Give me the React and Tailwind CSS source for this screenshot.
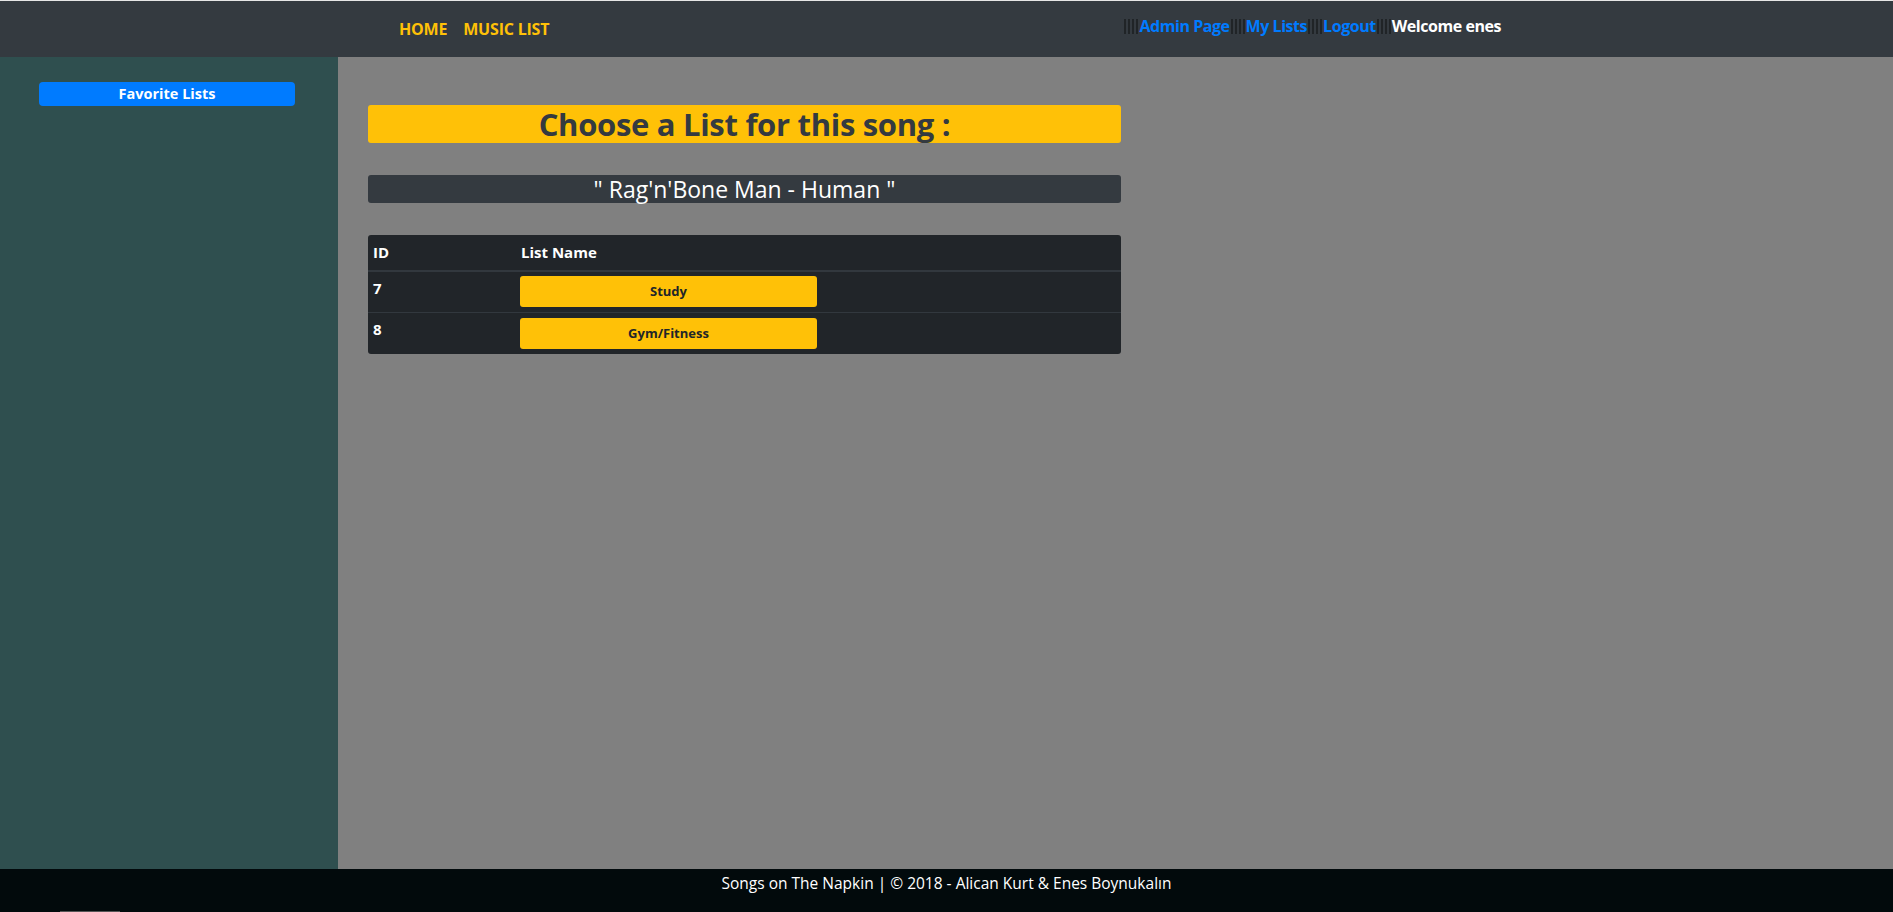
import React from 'react';

const lists = [
  { id: 7, name: 'Study' },
  { id: 8, name: 'Gym/Fitness' },
];

function Sep() {
  return (
    <span className="mx-px flex h-[15px] w-[14px] gap-[2px]">
      <span className="w-[2px] bg-[#202427]" />
      <span className="w-[2px] bg-[#202427]" />
      <span className="w-[2px] bg-[#202427]" />
      <span className="w-[2px] bg-[#202427]" />
    </span>
  );
}

export default function App() {
  return (
    <div className="flex h-screen flex-col font-['Open_Sans',sans-serif]">
      <div className="h-px bg-[#e6e6e6]" />
      <nav className="flex h-[56px] shrink-0 items-center bg-[#343a40] text-[16px] font-bold">
        <div className="ml-[399px] flex gap-[16px] text-[#ffc107] tracking-[-0.2px]">
          <a href="#">HOME</a>
          <a href="#">MUSIC LIST</a>
        </div>
        <div className="ml-auto mr-[392px] -mt-[6px] flex items-center text-[#007bff] tracking-[-0.45px]">
          <Sep />
          <a href="#">Admin Page</a>
          <Sep />
          <a href="#">My Lists</a>
          <Sep />
          <a href="#">Logout</a>
          <Sep />
          <span className="text-white">Welcome enes</span>
        </div>
      </nav>

      <div className="flex flex-1">
        <aside className="w-[338px] shrink-0 bg-[#2f4f4f] pl-[39px] pt-[24px]">
          <button className="h-[24px] w-[256px] rounded-[4px] bg-[#007bff] text-[14.5px] font-bold text-white">
            Favorite Lists
          </button>
        </aside>

        <main className="flex-1 bg-[#808080] pl-[30px] pt-[48px]">
          <div className="w-[753px]">
            <h2 className="flex h-[38px] items-center justify-center rounded-[3px] bg-[#ffc107] text-[31px] font-bold tracking-[-0.3px] text-[#343a40]">
              Choose a List for this song :
            </h2>
            <div className="mt-[32px] flex h-[28px] items-center justify-center rounded-[3px] bg-[#343a40] text-[23px] text-white">
              " Rag'n'Bone Man - Human "
            </div>

            <table className="mt-[32px] w-full overflow-hidden rounded-[3px] bg-[#212529] text-[15px] text-white">
              <thead>
                <tr className="h-[36px] border-b-2 border-[#32383e] text-left">
                  <th className="w-[148px] px-[5px] font-bold">ID</th>
                  <th className="px-[5px] font-bold">List Name</th>
                </tr>
              </thead>
              <tbody>
                {lists.map((l, i) => (
                  <tr key={l.id} className={i === 0 ? 'h-[41px] border-b border-[#32383e]' : 'h-[42px]'}>
                    <td className="px-[5px] pb-[8px] align-middle font-bold">{l.id}</td>
                    <td className="px-[4px]">
                      <button className="h-[31px] w-[297px] rounded-[3px] bg-[#ffc107] text-[13px] font-bold text-[#212529]">
                        {l.name}
                      </button>
                    </td>
                  </tr>
                ))}
              </tbody>
            </table>
          </div>
        </main>
      </div>

      <footer className="relative h-[43px] shrink-0 bg-[#020a0c] pt-[3px] text-center text-[15.5px] text-white">
        Songs on The Napkin | © 2018 - Alican Kurt &amp; Enes Boynukalın
        <div className="absolute bottom-0 left-[60px] h-px w-[60px] bg-[#555]" />
      </footer>
    </div>
  );
}
